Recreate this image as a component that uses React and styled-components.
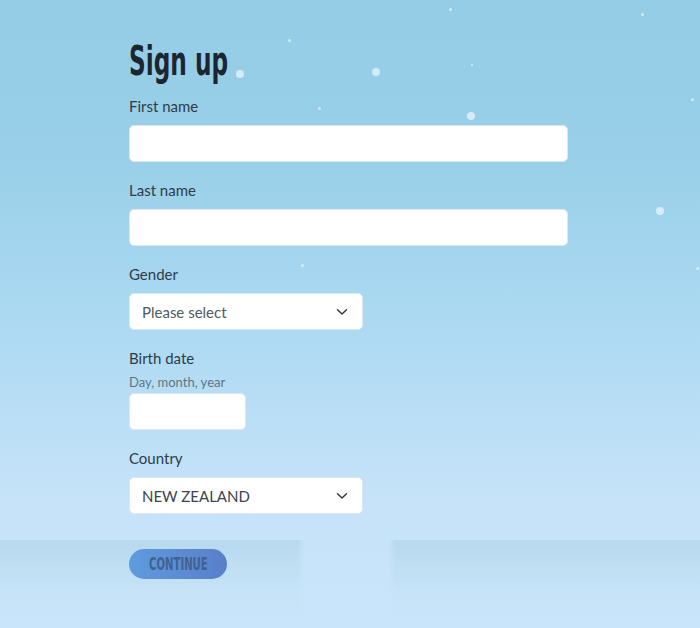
import styled, { createGlobalStyle } from "styled-components";

const GlobalStyle = createGlobalStyle`
  html, body {
    margin: 0;
    padding: 0;
  }
  body {
    font-family: Lato, "Open Sans", sans-serif;
  }
`;

// snow flakes scattered over the sky
const flakes = [
  { x: 240, y: 74, r: 4 },
  { x: 376, y: 72, r: 4 },
  { x: 471, y: 116, r: 4 },
  { x: 660, y: 211, r: 4 },
  { x: 289, y: 40, r: 1.5 },
  { x: 319, y: 108, r: 1.5 },
  { x: 450, y: 9, r: 1.5 },
  { x: 642, y: 14, r: 1.5 },
  { x: 472, y: 65, r: 1.2 },
  { x: 692, y: 99, r: 1.5 },
  { x: 302, y: 265, r: 1.5 },
  { x: 697, y: 268, r: 1.5 },
];

const Chevron = () => (
  <svg width="12" height="8" viewBox="0 0 12 8" fill="none">
    <path d="M1.5 1.8 L6 6 L10.5 1.8" stroke="#333" strokeWidth="1.4" strokeLinecap="round" strokeLinejoin="round" />
  </svg>
);

const Field = ({ label, hint, children }) => (
  <FieldBlock>
    <Label $hasHint={!!hint}>{label}</Label>
    {hint && <Hint>{hint}</Hint>}
    {children}
  </FieldBlock>
);

const App = () => {
  return (
    <>
      <GlobalStyle />
      <Page>
        <Ground />
        {flakes.map((f, i) => (
          <Flake key={i} style={{ left: f.x - f.r, top: f.y - f.r, width: f.r * 2, height: f.r * 2 }} />
        ))}
        <Form>
          <Title>Sign up</Title>
          <Field label="First name">
            <TextInput $width="439px" />
          </Field>
          <Field label="Last name">
            <TextInput $width="439px" />
          </Field>
          <Field label="Gender">
            <Select>
              <SelectText $muted>Please select</SelectText>
              <Chevron />
            </Select>
          </Field>
          <Field label="Birth date" hint="Day, month, year">
            <TextInput $width="117px" />
          </Field>
          <Field label="Country">
            <Select>
              <SelectText>NEW ZEALAND</SelectText>
              <Chevron />
            </Select>
          </Field>
          <Button>
            <ButtonLabel>CONTINUE</ButtonLabel>
          </Button>
        </Form>
      </Page>
    </>
  );
};

const Page = styled.div`
  position: relative;
  overflow: hidden;
  min-height: 628px;
  background: linear-gradient(180deg, #95cde6 0%, #99cfe8 25%, #abd9f2 50%, #c6e3f9 80%, #c9e5fb 100%);
`;

const Ground = styled.div`
  position: absolute;
  left: 0;
  right: 0;
  top: 540px;
  bottom: 0;
  background:
    linear-gradient(90deg, rgba(201, 229, 251, 0) 0%, rgba(201, 229, 251, 0) 42.5%, rgba(201, 229, 251, 0.85) 43.5%, rgba(201, 229, 251, 0.85) 55.5%, rgba(201, 229, 251, 0) 56.5%),
    linear-gradient(180deg, #b7d8ed 0%, #bedef2 25%, #c6e3f8 60%, #c9e5fb 100%);
`;

const Flake = styled.div`
  position: absolute;
  border-radius: 50%;
  background: rgba(225, 240, 250, 0.85);
`;

const Form = styled.div`
  position: relative;
  display: flex;
  flex-direction: column;
  align-items: flex-start;
  width: 439px;
  padding: 38px 0 0 129px;
`;

const Title = styled.h1`
  margin: 0 0 12px;
  font-family: "DejaVu Sans Condensed", "DejaVu Sans", sans-serif;
  font-weight: bold;
  font-size: 41px;
  line-height: 46px;
  color: #1c2630;
  transform: scaleX(0.63);
  transform-origin: left center;
  white-space: nowrap;
`;

const FieldBlock = styled.div`
  display: flex;
  flex-direction: column;
  align-items: flex-start;
  margin-bottom: 18px;
`;

const Label = styled.div`
  font-size: 15px;
  line-height: 20px;
  color: #2d3d48;
  margin-bottom: ${(p) => (p.$hasHint ? "6px" : "9px")};
`;

const Hint = styled.div`
  font-size: 13px;
  line-height: 16px;
  color: #5f7583;
  margin-bottom: 3px;
`;

const TextInput = styled.div`
  box-sizing: border-box;
  width: ${(p) => p.$width};
  height: 37px;
  background: #fff;
  border: 1px solid #dce8f0;
  border-radius: 5px;
`;

const Select = styled.div`
  box-sizing: border-box;
  width: 234px;
  height: 37px;
  padding: 0 14px 0 12px;
  display: flex;
  align-items: center;
  justify-content: space-between;
  background: #fff;
  border: 1px solid #dce8f0;
  border-radius: 5px;
`;

const SelectText = styled.span`
  font-size: 15px;
  color: ${(p) => (p.$muted ? "#4f5a62" : "#3a444b")};
`;

const Button = styled.div`
  margin-top: 17px;
  width: 98px;
  height: 30px;
  border-radius: 15px;
  display: flex;
  align-items: center;
  justify-content: center;
  background: linear-gradient(90deg, #5e9cdd 0%, #5a7ecb 100%);
`;

const ButtonLabel = styled.span`
  display: inline-block;
  font-family: "DejaVu Sans Condensed", "DejaVu Sans", sans-serif;
  font-weight: bold;
  font-size: 17px;
  line-height: 20px;
  color: #41618f;
  transform: scaleX(0.66);
`;

export default App;
